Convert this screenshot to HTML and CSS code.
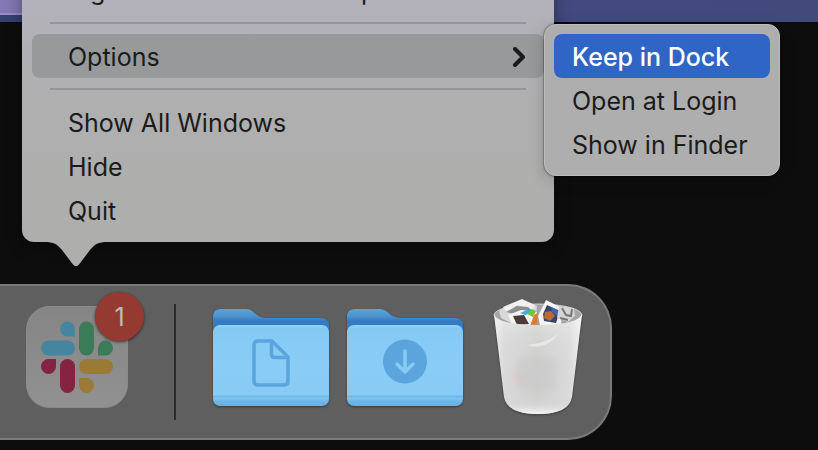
FILE: index.html
```html
<!DOCTYPE html>
<html lang="en">
<head>
<meta charset="utf-8">
<title>Dock</title>
<link rel="stylesheet" href="styles.css">
</head>
<body>
<div class="desktop">
  <div class="wallpaper"><div class="window-edge"></div></div>

  <div class="menu context-menu" role="menu" aria-label="Slack">
    <button class="item" role="menuitem">Sign in to Another Workspace...</button>
    <hr>
    <button class="item open" role="menuitem" aria-haspopup="true" aria-expanded="true">Options
      <svg class="chevron" viewBox="0 0 14 20" aria-hidden="true"><path d="M3 2L11 10L3 18"/></svg>
    </button>
    <hr>
    <button class="item" role="menuitem">Show All Windows</button>
    <button class="item" role="menuitem">Hide</button>
    <button class="item" role="menuitem">Quit</button>
    <svg class="pointer" viewBox="0 0 64 26" aria-hidden="true"><path d="M0 0C10 0 13 2 18 8L29 22.500Q32 26 35 22.500L46 8C51 2 54 0 64 0Z"/></svg>
  </div>

  <div class="menu submenu" role="menu" aria-label="Options">
    <button class="item selected" role="menuitem">Keep in Dock</button>
    <button class="item" role="menuitem">Open at Login</button>
    <button class="item" role="menuitem">Show in Finder</button>
  </div>

  <nav class="dock" aria-label="Dock">
    <a class="app" href="#slack" aria-label="Slack">
      <svg class="slack" viewBox="0 0 102 102" aria-hidden="true">
        <defs><linearGradient id="tile" x2="0" y2="1"><stop stop-color="#858585"/><stop offset="1" stop-color="#919191"/></linearGradient></defs>
        <rect x=".5" y=".5" width="101" height="101" rx="23" fill="url(#tile)" stroke="#8b8b8b"/>
        <g fill="#46859f"><path d="M49 30.500H41.500A7.500 7.500 0 1 1 49 23Z"/><rect x="15" y="34.500" width="34" height="15" rx="7.500"/></g>
        <g fill="#3b7b57"><rect x="53" y="15.500" width="15" height="34" rx="7.500"/><path d="M72 49.500V42A7.500 7.500 0 1 1 79.500 49.500Z"/></g>
        <g fill="#842442"><path d="M30 53V60.500A7.500 7.500 0 1 1 22.500 53Z"/><rect x="34" y="53" width="15" height="34" rx="7.500"/></g>
        <g fill="#9b7a35"><rect x="53" y="53" width="34" height="15" rx="7.500"/><path d="M53 72H60.500A7.500 7.500 0 1 1 53 79.500Z"/></g>
      </svg>
      <span class="badge">1</span>
    </a>
    <span class="divider"></span>
    <a class="folder" href="#documents" aria-label="Documents">
      <svg viewBox="0 0 116 98" aria-hidden="true">
        <defs>
          <linearGradient id="back" x2="0" y2="1"><stop stop-color="#5ba5dc"/><stop offset=".12" stop-color="#4c92cc"/><stop offset=".2" stop-color="#337bc3"/></linearGradient>
          <linearGradient id="front" x2="0" y2="1"><stop stop-color="#94d2fa"/><stop offset=".04" stop-color="#84c9f5"/><stop offset=".5" stop-color="#8acdf7"/><stop offset=".86" stop-color="#86caf5"/><stop offset=".88" stop-color="#72b8e7"/><stop offset=".91" stop-color="#7ec4f1"/><stop offset=".94" stop-color="#70b5e4"/><stop offset="1" stop-color="#69afdf"/></linearGradient>
        </defs>
        <path fill="url(#back)" d="M0 8Q0 0 8 0H33C41 0 43 9 53 9H108Q116 9 116 17V60H0Z"/>
        <rect y="16" width="116" height="81" rx="7" fill="url(#front)"/>
        <g fill="none" stroke="#5ba5dc" stroke-width="3.500" stroke-linejoin="round"><path d="M45 32H59L75 48V72Q75 76 71 76H45Q41 76 41 72V36Q41 32 45 32Z"/><path d="M58.500 32V45Q58.500 48.500 62 48.500H75"/></g>
      </svg>
    </a>
    <a class="folder" href="#downloads" aria-label="Downloads">
      <svg viewBox="0 0 116 98" aria-hidden="true">
        <path fill="url(#back)" d="M0 8Q0 0 8 0H33C41 0 43 9 53 9H108Q116 9 116 17V60H0Z"/>
        <rect y="16" width="116" height="81" rx="7" fill="url(#front)"/>
        <circle cx="58" cy="52.500" r="22" fill="#5ba5dc"/>
        <path d="M58 42V63M50 55L58 63L66 55" fill="none" stroke="#87caf5" stroke-width="3.500" stroke-linecap="round" stroke-linejoin="round"/>
      </svg>
    </a>
    <a class="trash" href="#trash" aria-label="Trash">
      <svg viewBox="0 0 90 118" aria-hidden="true">
        <defs>
          <linearGradient id="bin"><stop stop-color="#eeeeee"/><stop offset=".12" stop-color="#dadada"/><stop offset=".5" stop-color="#d0d0cf"/><stop offset=".86" stop-color="#dcdcdc"/><stop offset="1" stop-color="#f5f5f5"/></linearGradient>
          <linearGradient id="shade" x2="0" y2="1"><stop stop-color="#ffffff" stop-opacity=".4"/><stop offset=".3" stop-color="#dddddd" stop-opacity=".2"/><stop offset=".85" stop-color="#cccccc" stop-opacity=".1"/><stop offset="1" stop-color="#f3f5f8"/></linearGradient>
          <filter id="soft" x="-20%" y="-20%" width="140%" height="140%"><feGaussianBlur stdDeviation="3"/></filter>
        </defs>
        <ellipse cx="45" cy="17" rx="44" ry="11" fill="#a5a5a6" stroke="#d0d0d0"/>
        <path fill="#d9d9d9" d="M6 13L13 8L30 3L44 8L42 24L22 27L8 20Z"/>
        <path fill="#f0f0f0" d="M10 9L29 1L42 7L40 12L24 7L14 14Z"/>
        <path fill="#8d8d8e" d="M13 14L24 8L35 9L41 14L26 17Z"/>
        <path fill="#f4f4f4" d="M15 17L28 12L44 14L40 28L20 28Z"/>
        <path fill="#493b3a" d="M20 18L31 17L36 26L24 27Z"/>
        <path fill="#2eb2df" d="M27 15L37 11L41 14L32 17Z"/>
        <path fill="#74c638" d="M34 16L39 11L43 13L40 19Z"/>
        <path fill="#db7d38" d="M41 17L45 15L44 28H37Z"/>
        <path fill="#f4f4f4" d="M53 2L69 10L68 27H47L45 18Z"/>
        <path fill="#354468" d="M54 7L67 13L63 25L51 23L50 16Z"/>
        <path fill="#b86a38" d="M52 14L58 13L62 18L57 23L51 20Z"/>
        <path fill="#4463a7" d="M58 9L67 13L64 18L59 14Z"/>
        <path fill="#d5d5d5" d="M66 8L81 10L82 18L75 24L64 20Z"/>
        <path fill="none" stroke="#777" stroke-width="2" d="M69 10L73 17L78 18L79 11M67 20L75 22"/>
        <path fill="url(#bin)" d="M1 16Q4 27 45 27Q85 27 89 16L79 99Q76 116 45 116Q14 116 11 99Z"/>
        <path fill="url(#shade)" d="M1 16Q4 27 45 27Q85 27 89 16L79 99Q76 116 45 116Q14 116 11 99Z"/>
        <path fill="#ececec" opacity=".8" d="M69 31Q61 44 34 47Q54 54 69 31"/>
        <g filter="url(#soft)"><path fill="#d9c4c1" opacity=".4" d="M20 72L34 75L29 87L20 84Z"/><path fill="#c2c3c2" opacity=".4" d="M24 61Q46 53 66 63L62 92Q43 97 26 91Z"/></g>
      </svg>
    </a>
  </nav>
</div>
</body>
</html>
```
FILE: styles.css
```css
* { box-sizing: border-box; }
body { margin: 0; background: #0d0d0d; font-family: Inter, "Liberation Sans", sans-serif; }
.desktop { position: relative; display: flex; flex-direction: column; min-height: 100vh; padding-bottom: 10px; overflow: hidden; }
.wallpaper { height: 22px; background: linear-gradient(90deg, #34416e, #434a80 70%, #424a7c); }
.window-edge { width: 40px; height: 15px; background: #8478b5; border-bottom: 2px solid #9c8cc9; }

.menu { position: absolute; padding: 10px; border-radius: 12px; background: #aeaeae; }
.context-menu { top: -42px; left: 22px; width: 532px; background: linear-gradient(#b3b2bb 42px, #b0b0b4 90px, #afafaf 170px, #aeaeac); box-shadow: 0 4px 16px #00000066; }
.submenu { top: 24px; left: 544px; width: 236px; border: 1px solid #bcbcbc; padding: 9px; box-shadow: 0 0 1px 1px #00000044, 0 4px 16px #00000033; }
.item { display: flex; align-items: center; justify-content: space-between; width: 100%; height: 44px; padding: 2px 18px 0; border: 0; border-radius: 8px; background: none; color: #1b1b1b; font: 25px/42px Inter, "Liberation Sans", sans-serif; text-align: left; white-space: nowrap; }
.context-menu .item { padding-left: 36px; }
.open { background: #98999b; }
.selected { background: #2f66c5; color: #fff; font-weight: 500; }
hr { height: 2px; margin: 10px 18px; border: 0; background: #949596; }
.chevron { width: 14px; height: 20px; fill: none; stroke: #1b1b1b; stroke-width: 4; stroke-linecap: round; stroke-linejoin: round; }
.pointer { position: absolute; top: 100%; left: 22px; width: 64px; height: 26px; fill: #aeaeac; }

.dock { display: flex; align-items: center; width: 612px; height: 156px; margin-top: auto; padding-left: 26px; border: 2px solid #7a7a7a; border-left: 0; border-radius: 0 44px 44px 0; background: #5f5f5f; }
.dock svg { display: block; width: 100%; }
.app { position: relative; width: 102px; margin-bottom: 10px; text-decoration: none; }
.badge { position: absolute; top: -14px; right: -16px; width: 49px; height: 49px; border-radius: 50%; background: #943a30; box-shadow: 0 1px 3px #00000099; color: #c2b7b5; font-size: 25px; line-height: 50px; text-align: center; }
.divider { width: 2px; height: 116px; margin: 0 37px 0 46px; background: #2b2b2b; }
.folder { width: 116px; margin-right: 18px; margin-bottom: 8px; filter: drop-shadow(0 1px 1px #00000066); }
.trash { width: 90px; margin-left: 12px; margin-bottom: 10px; filter: drop-shadow(0 1px 1px #00000055); }
```
